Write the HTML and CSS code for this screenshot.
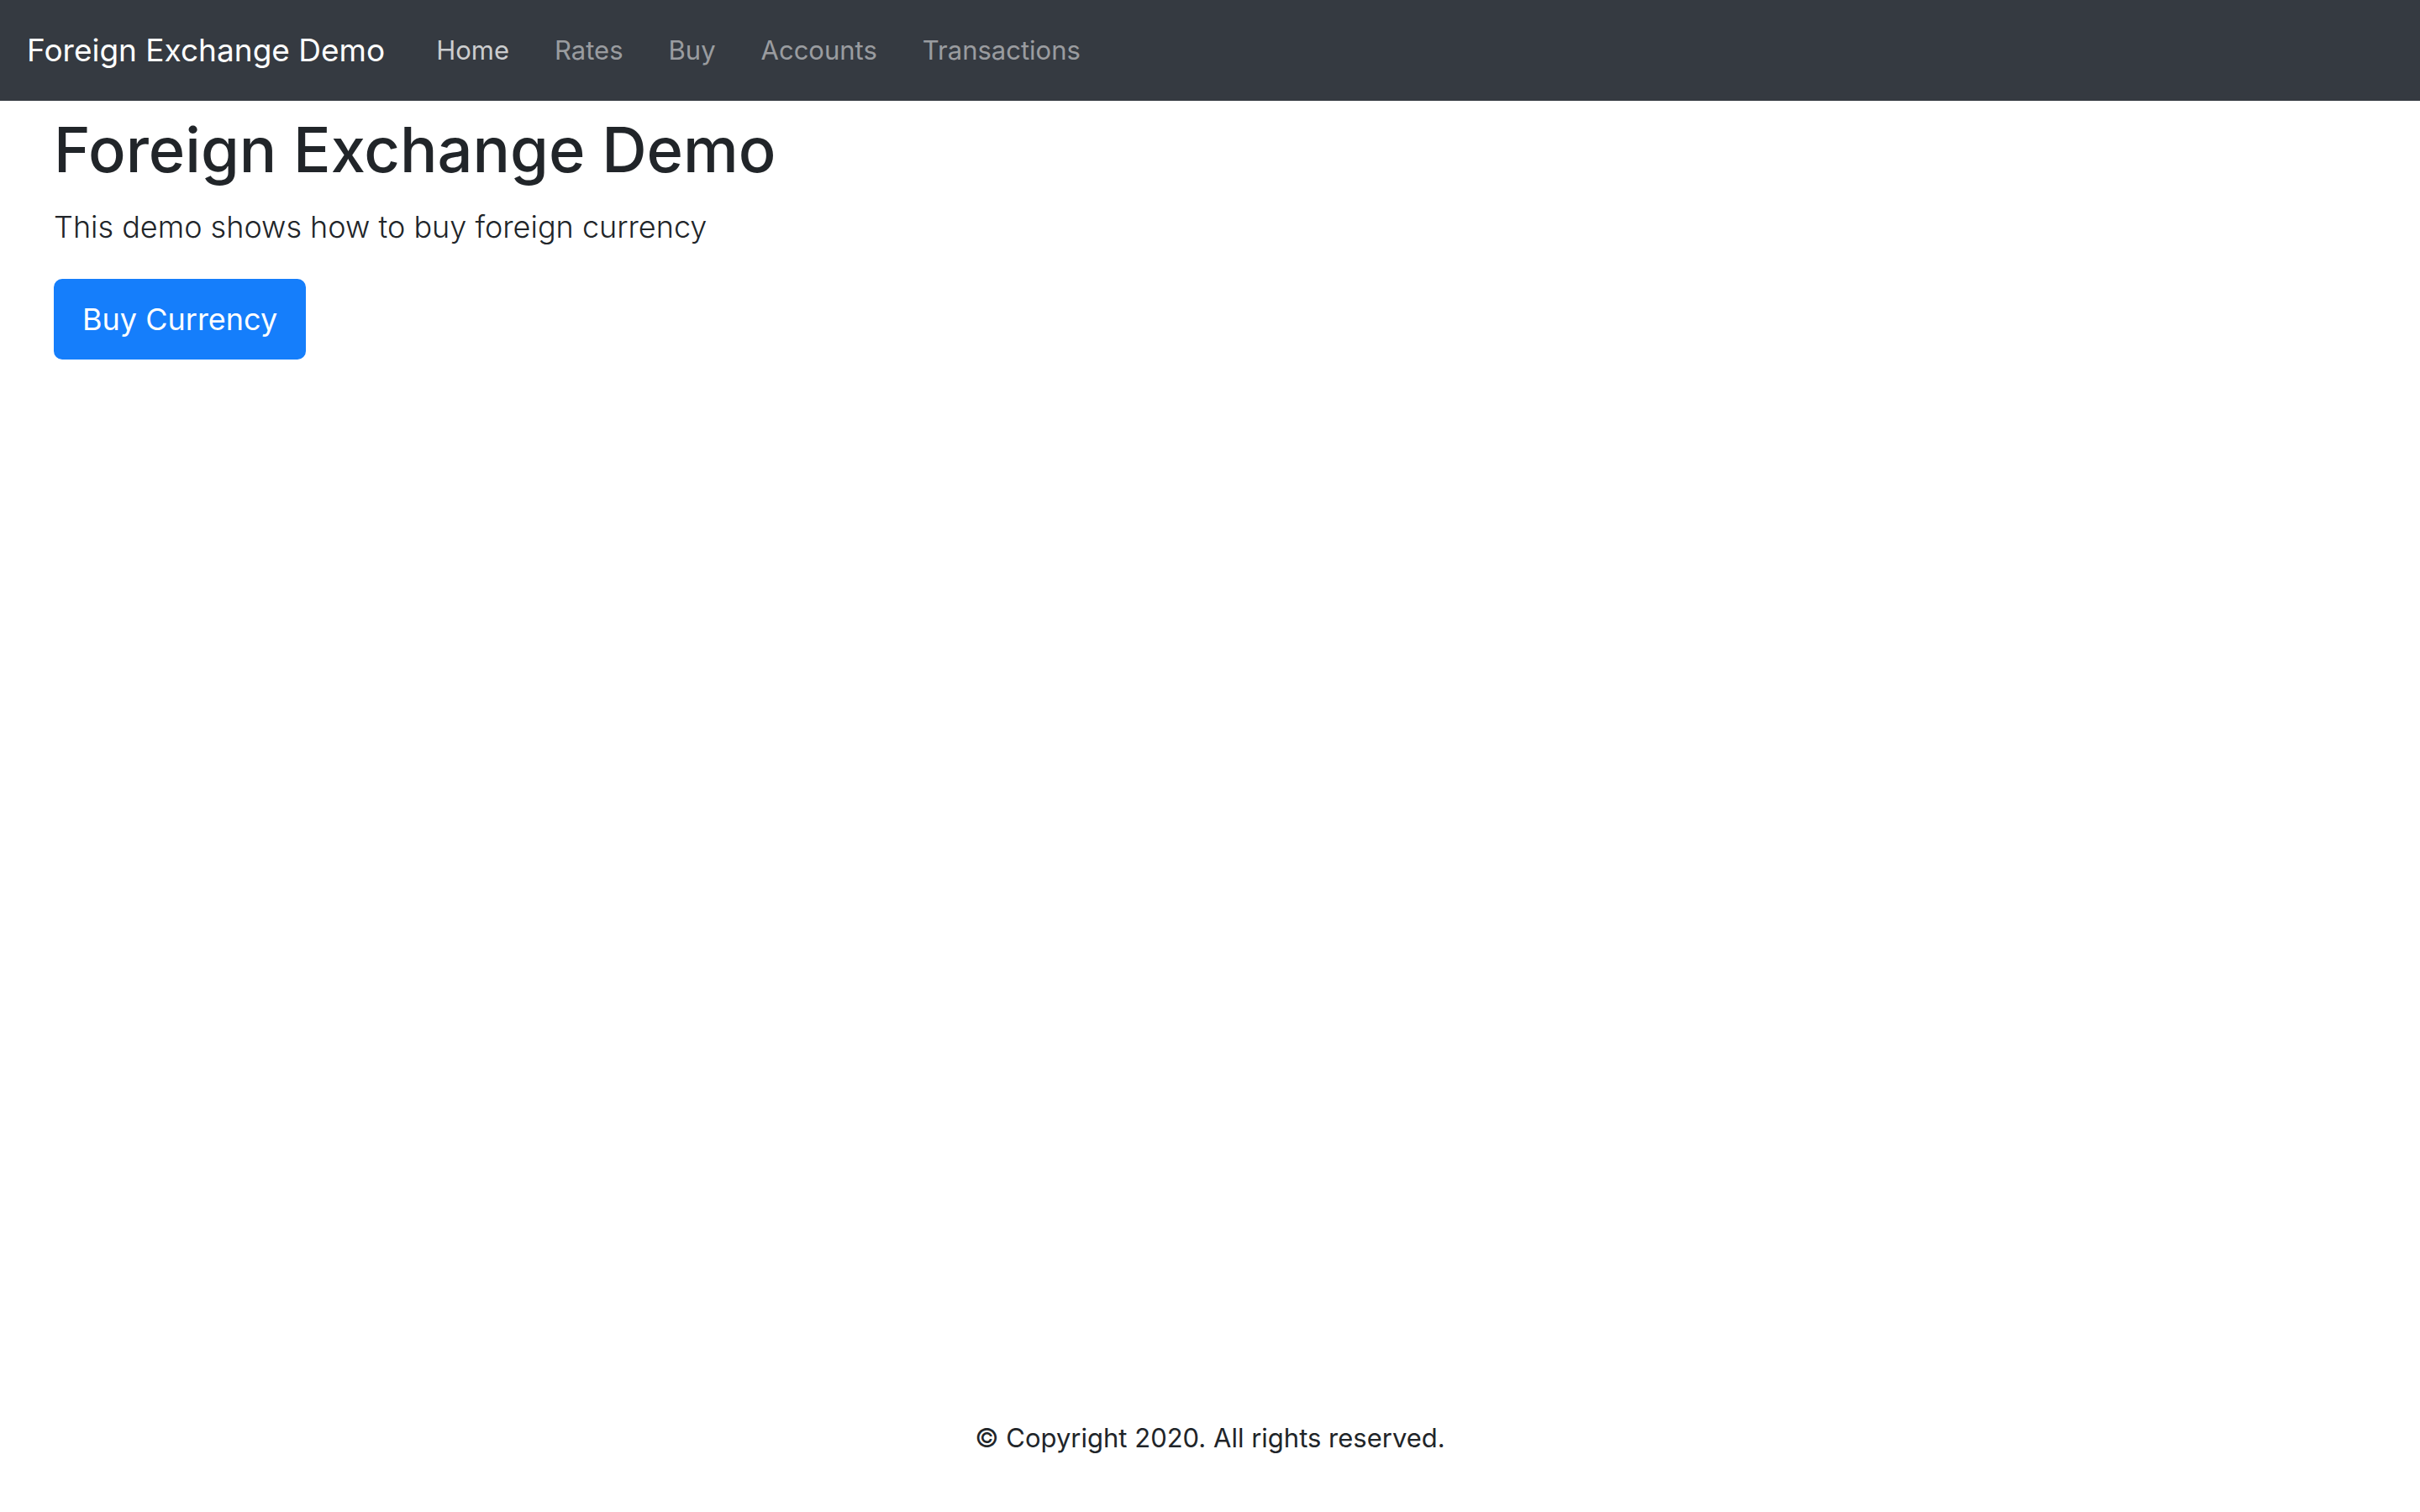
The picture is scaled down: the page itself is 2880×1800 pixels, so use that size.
FILE: index.html
```html
<!DOCTYPE html>
<html lang="en">
<head>
<meta charset="utf-8">
<title>Foreign Exchange Demo</title>
<link rel="stylesheet" href="styles.css">
</head>
<body>
<header class="navbar">
  <a class="brand" href="#">Foreign Exchange Demo</a>
  <nav class="nav">
    <a class="nav-link active" href="#">Home</a>
    <a class="nav-link" href="#">Rates</a>
    <a class="nav-link" href="#">Buy</a>
    <a class="nav-link" href="#">Accounts</a>
    <a class="nav-link" href="#">Transactions</a>
  </nav>
</header>
<main class="content">
  <h1 class="title">Foreign Exchange Demo</h1>
  <p class="lead">This demo shows how to buy foreign currency</p>
  <button class="btn" type="button">Buy Currency</button>
</main>
<footer class="footer">© Copyright 2020. All rights reserved.</footer>
</body>
</html>
```
FILE: styles.css
```css
* { box-sizing: border-box; }
body {
  margin: 0;
  min-height: 100vh;
  display: flex;
  flex-direction: column;
  font-family: Inter, "Liberation Sans", sans-serif;
  font-size: 31px;
  line-height: 48px;
  color: #212529;
  background: #fff;
}
.navbar {
  display: flex;
  align-items: center;
  gap: 34px;
  padding: 16px 32px;
  background: #353a41;
}
.brand {
  padding: 14px 0;
  font-size: 37px;
  line-height: 60px;
  color: #fff;
  text-decoration: none;
}
.nav { display: flex; }
.nav-link {
  padding: 16px 27px;
  color: rgba(255, 255, 255, 0.5);
  text-decoration: none;
}
.nav-link.active { color: rgba(255, 255, 255, 0.75); }
.content { flex: 1; padding: 8px 64px; }
.title {
  margin: 0 0 12px;
  font-size: 74px;
  font-weight: 500;
  line-height: 100px;
}
.lead {
  margin: 0 0 32px;
  font-size: 36px;
  font-weight: 300;
  line-height: 60px;
}
.btn {
  padding: 16px 32px;
  border: 2px solid #157efb;
  border-radius: 10px;
  background: #157efb;
  color: #fff;
  font: inherit;
  font-size: 36px;
  line-height: 60px;
}
.footer { padding: 32px 32px 64px; text-align: center; }
```
